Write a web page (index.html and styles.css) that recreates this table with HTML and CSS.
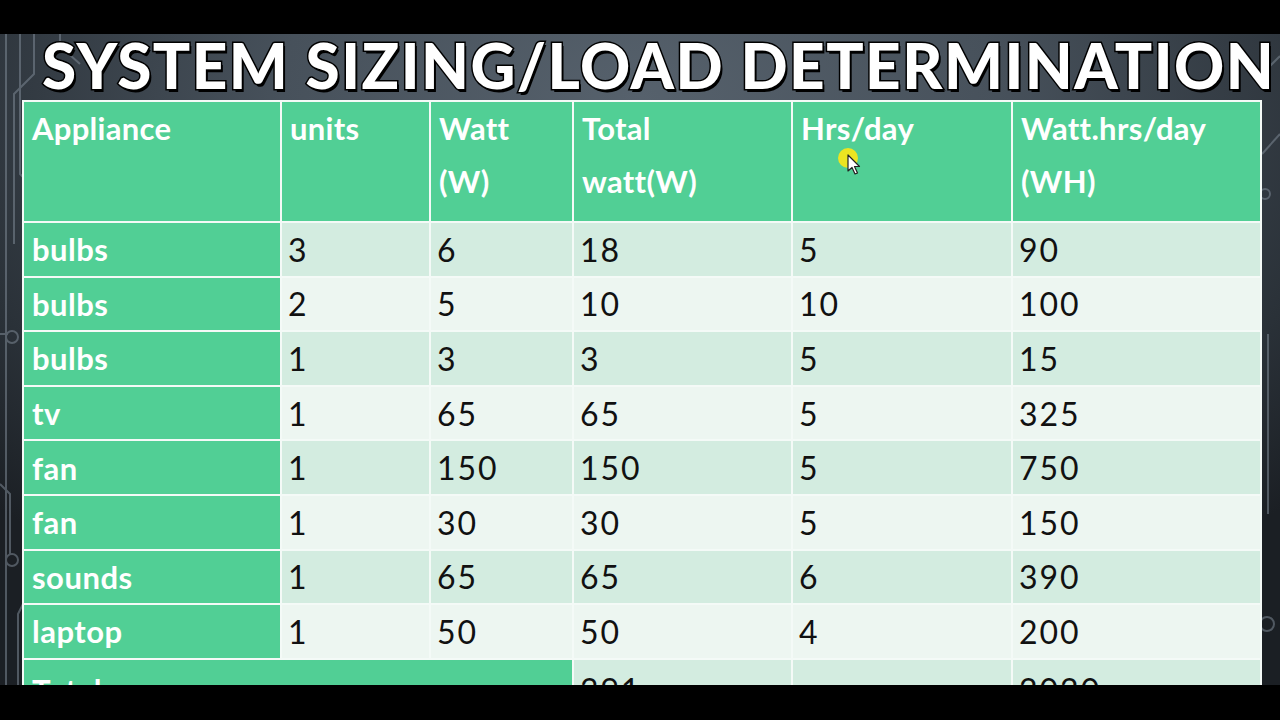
FILE: index.html
```html
<!DOCTYPE html>
<html>
<head>
<meta charset="utf-8">
<link rel="stylesheet" href="styles.css">
</head>
<body>
<div class="screen">
  <div class="bar-top"></div>
  <div class="stage">
    <svg class="circuit" width="1280" height="651" viewBox="0 0 1280 651">
      <g fill="none" stroke="#7d8894" stroke-width="2" opacity="0.55">
        <path d="M6 0 V651"/>
        <path d="M20 0 V140 L40 160 V250"/>
        <circle cx="44" cy="254" r="5"/>
        <path d="M34 0 V40 L14 60 V210"/>
        <path d="M0 300 H8"/>
        <circle cx="12" cy="303" r="6"/>
        <path d="M0 450 L10 460 V520"/>
        <circle cx="12" cy="526" r="6"/>
        <path d="M28 560 L18 580 V651"/>
        <path d="M60 0 V12 L80 30"/>
        <path d="M1262 40 L1280 22"/>
        <path d="M1262 120 L1280 100"/>
        <circle cx="1265" cy="160" r="5"/>
        <circle cx="1267" cy="590" r="7"/>
        <path d="M1268 300 V480"/>
      </g>
    </svg>
    <h1 class="title">SYSTEM SIZING/LOAD DETERMINATION</h1>
    <table class="load">
      <colgroup>
        <col class="c1"><col class="c2"><col class="c3"><col class="c4"><col class="c5"><col class="c6">
      </colgroup>
      <thead>
        <tr class="head">
          <th>Appliance</th>
          <th>units</th>
          <th>Watt<br>(W)</th>
          <th>Total<br>watt(W)</th>
          <th>Hrs/day</th>
          <th>Watt.hrs/day<br>(WH)</th>
        </tr>
      </thead>
      <tbody>
        <tr class="odd"><th>bulbs</th><td>3</td><td>6</td><td>18</td><td>5</td><td>90</td></tr>
        <tr class="even"><th>bulbs</th><td>2</td><td>5</td><td>10</td><td>10</td><td>100</td></tr>
        <tr class="odd"><th>bulbs</th><td>1</td><td>3</td><td>3</td><td>5</td><td>15</td></tr>
        <tr class="even"><th>tv</th><td>1</td><td>65</td><td>65</td><td>5</td><td>325</td></tr>
        <tr class="odd"><th>fan</th><td>1</td><td>150</td><td>150</td><td>5</td><td>750</td></tr>
        <tr class="even"><th>fan</th><td>1</td><td>30</td><td>30</td><td>5</td><td>150</td></tr>
        <tr class="odd"><th>sounds</th><td>1</td><td>65</td><td>65</td><td>6</td><td>390</td></tr>
        <tr class="even"><th>laptop</th><td>1</td><td>50</td><td>50</td><td>4</td><td>200</td></tr>
        <tr class="odd total"><th colspan="3">Total</th><td>391</td><td></td><td>2020</td></tr>
      </tbody>
    </table>
    <div class="cursor">
      <span class="dot"></span>
      <svg class="arrow" width="14" height="22" viewBox="0 0 14 22">
        <path d="M1 1 V17 L5 13.5 L8 20 L10.5 19 L7.5 12.5 L12.5 12.5 Z" fill="#fff" stroke="#222" stroke-width="1.2" stroke-linejoin="round"/>
      </svg>
    </div>
  </div>
  <div class="bar-bottom"></div>
</div>
</body>
</html>
```
FILE: styles.css
```css
html, body {
  margin: 0;
  padding: 0;
  background: #000;
}
.screen {
  width: 1280px;
  height: 720px;
  display: flex;
  flex-direction: column;
  overflow: hidden;
}
.bar-top {
  height: 34px;
  background: #000;
  flex: none;
}
.bar-bottom {
  height: 35px;
  background: #000;
  flex: none;
}
.stage {
  position: relative;
  flex: 1;
  overflow: hidden;
  background: radial-gradient(ellipse 70% 90% at 50% 10%, #56616c 0%, #47515b 40%, #2a3138 80%, #1b1f24 100%);
  padding-left: 22px;
}
.circuit {
  position: absolute;
  left: 0;
  top: 0;
}
.title {
  position: relative;
  margin: 0;
  height: 66px;
  padding-left: 20px;
  font-family: "Lato", "Liberation Sans", sans-serif;
  font-weight: 900;
  font-size: 62px;
  line-height: 62px;
  letter-spacing: 1.5px;
  color: #fff;
  white-space: nowrap;
  -webkit-text-stroke: 3px #000;
  paint-order: stroke fill;
  text-shadow: 2px 3px 0 #000;
}
.load {
  position: relative;
  border-collapse: collapse;
  table-layout: fixed;
  width: 1238px;
  font-family: "Lato", "Liberation Sans", sans-serif;
}
.c1 { width: 258px; }
.c2 { width: 149px; }
.c3 { width: 143px; }
.c4 { width: 219px; }
.c5 { width: 220px; }
.c6 { width: 249px; }
.load th, .load td {
  border: 2px solid #f4faf7;
  padding: 0 0 0 6px;
  text-align: left;
  vertical-align: middle;
}
.load th {
  padding-left: 8px;
}
.head th {
  background: #51cf95;
  color: #fff;
  font-weight: 700;
  font-size: 31px;
  line-height: 53px;
  vertical-align: top;
  height: 119px;
  padding-top: 0;
  letter-spacing: 0.3px;
}
tbody tr {
  height: 54.6px;
}
tbody th {
  background: #51cf95;
  color: #fff;
  font-weight: 700;
  font-size: 31px;
  letter-spacing: 0.5px;
}
tbody td {
  color: #111;
  font-weight: 400;
  font-size: 32px;
  letter-spacing: 2px;
}
.odd td { background: #d3ece0; }
.even td { background: #edf6f1; }
.total th, .total td {
  vertical-align: top;
  line-height: 60px;
}
.cursor {
  position: absolute;
  left: 838px;
  top: 114px;
  width: 24px;
  height: 30px;
}
.cursor .dot {
  position: absolute;
  left: 0;
  top: 0;
  width: 20px;
  height: 20px;
  border-radius: 50%;
  background: #f4e61a;
  opacity: 0.95;
}
.cursor .arrow {
  position: absolute;
  left: 9px;
  top: 6px;
}
```
